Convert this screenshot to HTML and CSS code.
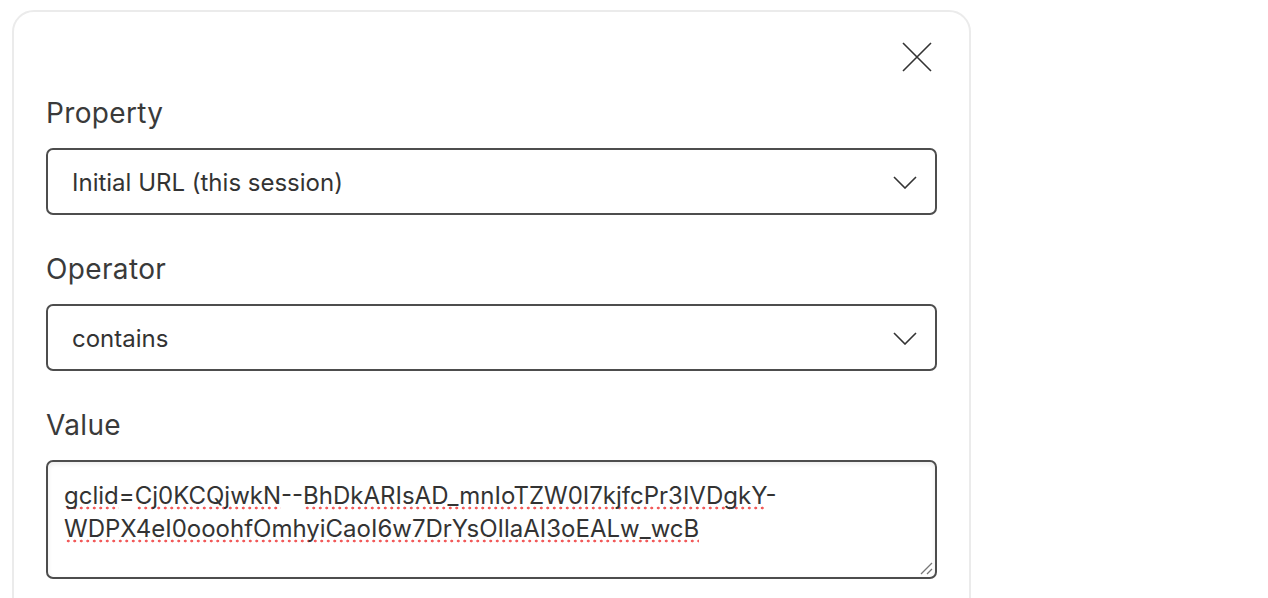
FILE: index.html
```html
<!DOCTYPE html>
<html lang="en">
<head>
<meta charset="utf-8">
<title>Filter</title>
<link rel="stylesheet" href="styles.css">
</head>
<body>
<div class="card">
  <div class="card-head">
    <button class="close" aria-label="Close">
      <svg width="30" height="30" viewBox="0 0 30 30"><path d="M1 1 L29 29 M29 1 L1 29" stroke="#333" stroke-width="1.6" fill="none"/></svg>
    </button>
  </div>
  <div class="field">
    <label class="label">Property</label>
    <div class="select">
      <span class="select-text">Initial URL (this session)</span>
      <svg class="chev" width="24" height="13" viewBox="0 0 24 13"><path d="M1 1 L12 12 L23 1" stroke="#333" stroke-width="1.6" fill="none"/></svg>
    </div>
  </div>
  <div class="field">
    <label class="label">Operator</label>
    <div class="select">
      <span class="select-text">contains</span>
      <svg class="chev" width="24" height="13" viewBox="0 0 24 13"><path d="M1 1 L12 12 L23 1" stroke="#333" stroke-width="1.6" fill="none"/></svg>
    </div>
  </div>
  <div class="field">
    <label class="label">Value</label>
    <div class="textarea">
      <div class="ta-text"><span class="sp">gclid</span>=<span class="sp">Cj0KCQjwkN</span>--<span class="sp">BhDkARIsAD_mnIoTZW0I7kjfcPr3IVDgkY</span>-<br><span class="sp">WDPX4eI0ooohfOmhyiCaoI6w7DrYsOIlaAI3oEALw_wcB</span></div>
      <svg class="grip" width="14" height="14" viewBox="0 0 14 14"><path d="M13 2 L2 13 M13 8 L8 13" stroke="#777" stroke-width="1.3" fill="none"/></svg>
    </div>
  </div>
</div>
</body>
</html>
```

FILE: styles.css
```css
* { box-sizing: border-box; }
html, body { margin: 0; background: #fff; }
body {
  padding: 10px 12px;
  font-family: Inter, "Noto Sans", sans-serif;
  color: #333;
}
.card {
  width: 959px;
  height: 700px;
  border: 2px solid #ebebeb;
  border-radius: 22px;
  padding: 30px 32px 0 32px;
  background: #fff;
}
.card-head {
  display: flex;
  justify-content: flex-end;
  height: 29px;
}
.close {
  border: 0;
  background: none;
  padding: 0;
  margin-right: 5px;
  width: 30px;
  height: 30px;
  cursor: pointer;
  display: block;
}
.close svg { display: block; }
.field {
  display: flex;
  flex-direction: column;
}
.card-head + .field { margin-top: 26px; }
.field + .field { margin-top: 38px; }
.label {
  font-size: 28px;
  line-height: 32px;
  color: #3a3a3a;
  margin-bottom: 19px;
  letter-spacing: 0.35px;
}
.select {
  height: 67px;
  border: 2px solid #4d4d4d;
  border-radius: 7px;
  display: flex;
  align-items: center;
  justify-content: space-between;
  padding: 0 18px 0 24px;
}
.select-text {
  font-size: 24px;
  color: #333;
  padding-top: 2px;
}
.chev { display: block; margin-top: 2px; }
.textarea {
  position: relative;
  height: 119px;
  border: 2px solid #4d4d4d;
  border-radius: 7px;
  padding: 17px 16px 15px;
  box-shadow: inset 0 2px 5px rgba(0,0,0,0.08);
}
.ta-text {
  font-size: 24px;
  line-height: 33px;
  color: #333;
}
.sp {
  background-image: radial-gradient(circle, #f25a5a 1.2px, transparent 1.7px);
  background-size: 6.5px 4px;
  background-repeat: repeat-x;
  background-position: 1px bottom;
}
.grip {
  position: absolute;
  right: 2px;
  bottom: 2px;
  display: block;
}
```
